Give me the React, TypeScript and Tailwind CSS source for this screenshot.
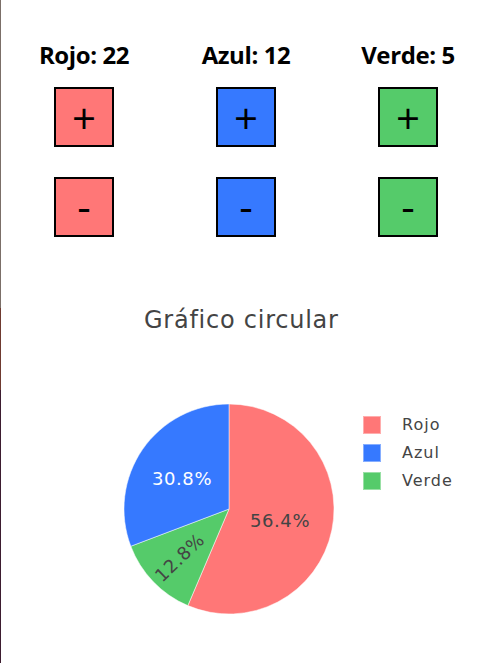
import React from "react";

type Slice = { label: string; value: number; color: string };

const data: Slice[] = [
  { label: "Rojo", value: 22, color: "#ff7777" },
  { label: "Azul", value: 12, color: "#3679ff" },
  { label: "Verde", value: 5, color: "#55cb6a" },
];

// pie order (clockwise from 12 o'clock): Rojo, Verde, Azul
const pieOrder = [0, 2, 1];

const R = 105;
const C = 110;

const point = (deg: number, r: number) => {
  const a = (deg * Math.PI) / 180;
  return [C + r * Math.sin(a), C - r * Math.cos(a)];
};

function Pie() {
  const total = data.reduce((s, d) => s + d.value, 0);
  let start = 0;
  const slices = pieOrder.map((i) => {
    const d = data[i];
    const sweep = (d.value / total) * 360;
    const [x1, y1] = point(start, R);
    const [x2, y2] = point(start + sweep, R);
    const large = sweep > 180 ? 1 : 0;
    const path = `M${C},${C} L${x1},${y1} A${R},${R} 0 ${large} 1 ${x2},${y2} Z`;
    start += sweep;
    return { ...d, path, pct: ((d.value / total) * 100).toFixed(1) + "%" };
  });

  return (
    <svg width={220} height={220} className="block" letterSpacing="0.6">
      {slices.map((s) => (
        <path key={s.label} d={s.path} fill={s.color} stroke="#ffffff" strokeWidth={0.5} />
      ))}
      {/* 56.4% */}
      <text x={161} y={128} fill="#444444" fontSize={18} textAnchor="middle">
        {slices[0].pct}
      </text>
      {/* 30.8% */}
      <text x={63} y={86} fill="#ffffff" fontSize={18} textAnchor="middle">
        {slices[2].pct}
      </text>
      {/* 12.8% rotated radial */}
      <text
        x={0}
        y={0}
        fill="#444444"
        fontSize={18}
        textAnchor="middle"
        transform="translate(65,163) rotate(-44)"
      >
        {slices[1].pct}
      </text>
    </svg>
  );
}

function Counter({ label, value, color }: Slice) {
  const btn =
    "w-[60px] h-[60px] border-2 border-black flex items-center justify-center text-[42px] leading-none text-black";
  return (
    <div className="flex flex-col items-center">
      <h2 className="text-[24px] font-bold leading-[32px] tracking-[-0.4px] text-black">
        {label}: {value}
      </h2>
      <button className={btn + " mt-[16px]"} style={{ backgroundColor: color }}>
        <span className="mt-[2px]">+</span>
      </button>
      <button className={btn + " mt-[30px]"} style={{ backgroundColor: color }}>
        <span className="-mt-[2px]">-</span>
      </button>
    </div>
  );
}

export default function App() {
  return (
    <div className="flex min-h-[663px] bg-white" style={{ fontFamily: "'Open Sans', 'Noto Sans', sans-serif" }}>
      <div className="w-px flex flex-col shrink-0">
        <div className="h-[308px] bg-[#7b6f68]" />
        <div className="h-[82px] bg-[#6f3a30]" />
        <div className="flex-1 bg-[#3d1d30]" />
      </div>
      <div className="flex-1 flex flex-col">
        <div className="grid grid-cols-3 w-[486px] ml-[2px] pt-[39px]">
          {data.map((d) => (
            <Counter key={d.label} {...d} />
          ))}
        </div>

        <div
          className="mt-[68px] pl-[143px] text-[24px] leading-[30px] tracking-[0.75px] text-[#444444]"
          style={{ fontFamily: "'DejaVu Sans', Verdana, sans-serif" }}
        >
          Gráfico circular
        </div>

        <div
          className="flex items-start mt-[64px] pl-[118px]"
          style={{ fontFamily: "'DejaVu Sans', Verdana, sans-serif" }}
        >
          <Pie />
          <div className="flex flex-col ml-[24px] mt-[17px] gap-[10px]">
            {data.map((d) => (
              <div key={d.label} className="flex items-center h-[18px]">
                <div
                  className="w-[18px] h-[18px] border border-white/40"
                  style={{ backgroundColor: d.color }}
                />
                <span className="ml-[21px] text-[16px] tracking-[1px] text-[#444444]">{d.label}</span>
              </div>
            ))}
          </div>
        </div>
      </div>
    </div>
  );
}
